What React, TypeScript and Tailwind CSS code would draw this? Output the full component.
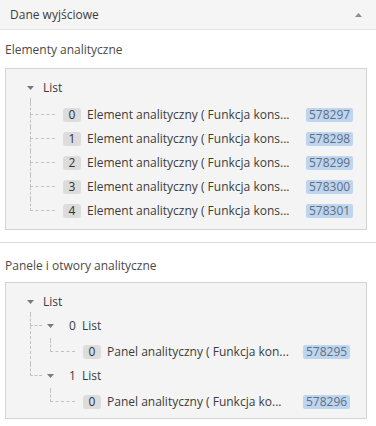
import React from "react";

const FONT = { fontFamily: "'Open Sans', 'Noto Sans', sans-serif" };

const elements = [
  { idx: 0, id: "578297" },
  { idx: 1, id: "578298" },
  { idx: 2, id: "578299" },
  { idx: 3, id: "578300" },
  { idx: 4, id: "578301" },
];

const DownArrow = () => (
  <svg width="7" height="4" viewBox="0 0 7 4" className="block">
    <path d="M0 0h7L3.5 4z" fill="#7a7a7a" />
  </svg>
);

const UpArrow = () => (
  <svg width="7" height="4" viewBox="0 0 7 4" className="block">
    <path d="M0 4h7L3.5 0z" fill="#8c8c8c" />
  </svg>
);

// left column of a tree item: elbow to the row, then a line down for non-last siblings
const Connector = ({ last, width }: { last: boolean; width: string }) => (
  <div className={`flex shrink-0 flex-col self-stretch ${width}`}>
    <div className="h-[12px] border-b border-l border-dashed border-[#c2c2c2]" />
    <div className={last ? "flex-1" : "flex-1 border-l border-dashed border-[#c2c2c2]"} />
  </div>
);

const Gap = ({ h }: { h: string }) => <div className={`${h} border-l border-dashed border-[#c2c2c2]`} />;

const Leaf = ({
  idx,
  label,
  id,
  last,
  textWidth,
}: {
  idx: number;
  label: string;
  id: string;
  last: boolean;
  textWidth: string;
}) => (
  <div className="flex">
    <Connector last={last} width="w-[25px]" />
    <div className="ml-[8px] flex h-[24px] items-center">
      <span className="flex h-[14px] w-[18px] items-center justify-center rounded-[3px] bg-[#dcdcdc] text-[12px] leading-none text-[#333]">
        {idx}
      </span>
      <span className={`ml-[6px] overflow-hidden whitespace-nowrap text-[12px] text-[#3c3c3c] ${textWidth}`}>{label}</span>
      <span className="ml-[6px] flex h-[14px] items-center rounded-[2px] bg-[#bed5ef] px-[3px] text-[12px] leading-none text-[#5f6f80]">
        {id}
      </span>
    </div>
  </div>
);

const RootRow = () => (
  <div className="flex h-[20px] items-center">
    <span className="flex w-[13px] justify-center">
      <DownArrow />
    </span>
    <span className="ml-[6px] text-[12px] text-[#3c3c3c]">List</span>
  </div>
);

const SubList = ({ n, id, last }: { n: number; id: string; last: boolean }) => (
  <div className="flex">
    <Connector last={last} width="w-[12px]" />
    <div className="flex flex-col">
      <div className="flex h-[24px] items-center pl-[2px]">
        <span className="flex w-[13px] justify-center">
          <DownArrow />
        </span>
        <span className="ml-[12px] text-[12px] text-[#3c3c3c]">{n}</span>
        <span className="ml-[6px] text-[12px] text-[#3c3c3c]">List</span>
      </div>
      <div className="ml-[8px]">
        <Gap h="h-[2px]" />
        <Leaf
          idx={0}
          label={n === 0 ? "Panel analityczny ( Funkcja kon..." : "Panel analityczny ( Funkcja ko..."}
          id={id}
          last
          textWidth="w-[190px]"
        />
      </div>
    </div>
  </div>
);

export default function App() {
  return (
    <div className="w-full bg-white" style={FONT}>
      <div className="flex h-[30px] items-center justify-between border-b border-[#e3e3e3] bg-[#f5f5f5] pl-[10px] pr-[14px]">
        <span className="text-[12px] text-[#3c3c3c]">Dane wyjściowe</span>
        <UpArrow />
      </div>

      <div className="border-b border-[#dadada] pb-[12px] pl-[5px] pr-[9px] pt-[10px]">
        <div className="flex h-[20px] items-center text-[12px] text-[#4a4a4a]">Elementy analityczne</div>
        <div className="mt-[8px] border border-[#d4d4d4] bg-[#f4f4f4] pb-[6px] pl-[18px] pt-[9px]">
          <RootRow />
          <div className="ml-[6px]">
            <Gap h="h-[5px]" />
            {elements.map((e, i) => (
              <Leaf
                key={e.id}
                idx={e.idx}
                label="Element analityczny ( Funkcja kons..."
                id={e.id}
                last={i === elements.length - 1}
                textWidth="w-[213px]"
              />
            ))}
          </div>
        </div>
      </div>

      <div className="pb-[8px] pl-[5px] pr-[9px] pt-[13px]">
        <div className="flex h-[20px] items-center text-[12px] text-[#4a4a4a]">Panele i otwory analityczne</div>
        <div className="mt-[6px] border border-[#d4d4d4] bg-[#f4f4f4] pb-[4px] pl-[18px] pt-[9px]">
          <RootRow />
          <div className="ml-[6px]">
            <Gap h="h-[2px]" />
            <SubList n={0} id="578295" last={false} />
            <SubList n={1} id="578296" last />
          </div>
        </div>
      </div>
    </div>
  );
}
